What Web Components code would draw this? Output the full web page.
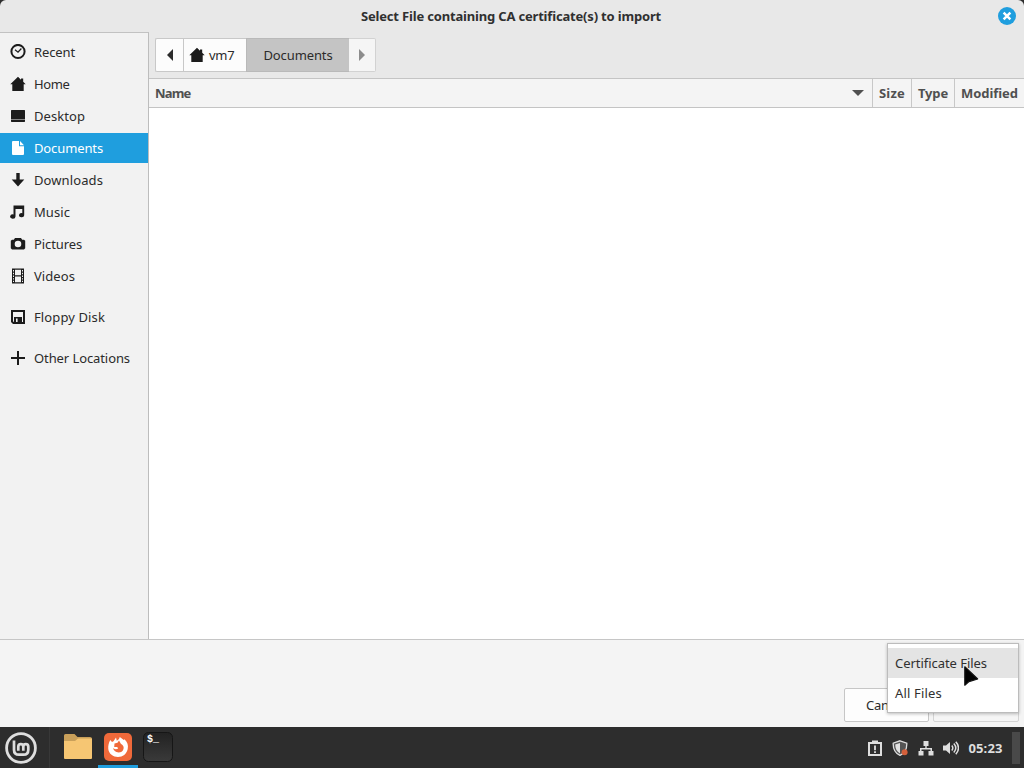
<!DOCTYPE html>
<html lang="en">
<head>
<meta charset="utf-8">
<title>Select File containing CA certificate(s) to import</title>
<style>
    html, body { margin: 0; height: 100%; overflow: hidden; background: #2d2d2d; }
    body { font: 13px/18px "Noto Sans", "Open Sans", sans-serif; color: #303030; }
</style>
</head>
<body>
<desktop-screen>
    <file-dialog slot="window" heading="Select File containing CA certificate(s) to import"></file-dialog>
    <task-panel slot="panel"></task-panel>
</desktop-screen>

<script>
// Symbolic icons, 16x16 grid unless a viewBox is given
const icons = {
    recent: '<circle cx="8" cy="7.5" r="6.6" fill="none" stroke="currentColor" stroke-width="2"/><path d="M5 5.800l3 2.400L11.400 4.500" fill="none" stroke="currentColor" stroke-width="1.300"/>',
    home: '<path d="M8 .8L.3 8.200h2V15h11.400V8.200h2L13.200 5.800V2.500h-2.200v1.200z"/>',
    desktop: '<path d="M1.500 2h13l.5.500V11.400H1V2.500zM1 12h14v1.500l-.5.500h-13l-.5-.5z"/>',
    documents: '<path d="M3 1h6v5.200h5V14a1 1 0 0 1-1 1H3a1 1 0 0 1-1-1V2a1 1 0 0 1 1-1zM10 1l4 4.200h-4z"/>',
    downloads: '<path d="M6.300 1h3.400v6.500H14.300l-6.300 7-6.300-7H6.300z"/>',
    music: '<path d="M3.500 1.500h10.700v9.800a2.600 2.100 0 1 1-1.900-2.100V5H5.500v7.500a2.700 2.200 0 1 1-2-2.100z"/>',
    pictures: '<path fill-rule="evenodd" d="M5 2h6l1.200 1.700H14l1.200 1.100v7.500L14 13.500H2L.8 12.300V4.800L2 3.700h1.800zM8 4.700a3.300 3.300 0 1 0 0 6.600 3.300 3.300 0 0 0 0-6.600z"/>',
    videos: '<path fill-rule="evenodd" d="M2 .5h12v15H2zM5 1.800v5.400h6V1.800zM5 8.600v5.600h6V8.600zM3 2v1.400h1V2zM3 4.800v1.400h1V4.800zM3 7.500v1.400h1V7.500zM3 10.200v1.400h1v-1.400zM3 12.700v1.400h1v-1.400zM12 2v1.400h1V2zM12 4.800v1.400h1V4.800zM12 7.500v1.400h1V7.500zM12 10.200v1.400h1v-1.400zM12 12.700v1.400h1v-1.400z"/>',
    floppy: '<path fill-rule="evenodd" d="M1 1h14v14H3l-2-2zM3 3v9.200l.8.800H4V8h8v5h1V3zM6 9.500V13h1.600V9.500z"/>',
    plus: '<path d="M7 1h2v6h6v2H9v6H7V9H1V7h6z"/>',
    back: '<path d="M11 2v12L5 8z"/>',
    forward: '<path d="M5 2v12l6-6z"/>',
    sort: '<path d="M2 5h12L8 11z"/>',
    close: '<circle cx="8" cy="8" r="8" fill="#1f9ede"/><path d="M5 5l6 6M11 5l-6 6" stroke="#fff" stroke-width="2.200"/>',
    report: '<path fill-rule="evenodd" d="M5 2V.5h6V2h4v14H1V2zM3 4v10h10V4zM7.100 5.500h1.800v4.800H7.100zM7.100 11.200h1.800V13H7.100z"/>',
    shield: '<path d="M8 .8l6.800 2.400c.2 5.500-1.600 9.800-6.800 12.200C2.800 13 1 8.700 1.200 3.200z" fill="#555" stroke="#ddd" stroke-width="1.300"/><path d="M8 3v10.400C4.600 11.500 3.200 8.500 3.200 4.600z" fill="#e0e0e0"/><circle cx="12.600" cy="12.300" r="3" fill="#d4603b"/>',
    network: '<path d="M5.500 1h5v5H8.700v2H14v3h1.500v4.500h-5V11h2V9.400h-9V11h2v4.500h-5V11H2V8h5.300V6H5.500z"/>',
    volume: '<path d="M0 5.500h3L7 2v12l-4-3.500H0z"/><path d="M8.800 5.500q2 2.500 0 5M10.800 3.500q4 4.500 0 9M12.800 1.800q5.400 6.200 0 12.400" fill="none" stroke="currentColor" stroke-width="1.500"/>',
    mint: '<circle cx="16" cy="16" r="14.400" fill="none" stroke="currentColor" stroke-width="2.800"/><path d="M9 8.500v9.200q0 5 5 5h4.500q4.800 0 4.800-5v-3a2.500 2.500 0 0 0-5 0v4m0-4a2.500 2.500 0 0 0-5 0v4" fill="none" stroke="currentColor" stroke-width="2.700"/>',
    folder: '<path d="M2 4.500q0-1.500 1.500-1.500h9l3 3H28q2 0 2 2v4H2z" fill="#c9a05a"/><path d="M2 10h11l3-2.500h14V27q0 1-1 1H3q-1 0-1-1z" fill="#f6c673"/>',
    firefox: '<rect x="2" y="2" width="28" height="28" rx="5" fill="#f0693a"/><path d="M8.300 9l1.700 2 1.500-.8L14 6.500l.8 3.200L17 8l.8-2 4 3 .7-.7c3 3 4 6 3.200 9.700-1 5-5 8-9.700 8S6.800 22.800 6.300 18C6 14.500 6.800 11.500 8.300 9z" fill="#fff"/><path d="M12.500 12.500l3-.8 1.500-2.200 2 3.500c2.800 1.200 3.300 4 2 6.200-1.300 2-4 2.800-6.500 1.800-2-.8-3.300-2.400-3.300-4 1.500 1.400 3.300 1.500 5 .5l-1-1.500h-3z" fill="#f0693a"/>',
    terminal: '<defs><linearGradient id="t" x2="0" y2="1"><stop stop-color="#222"/><stop offset="1" stop-color="#3a3a3a"/></linearGradient></defs><rect x="1.500" y="1.500" width="29" height="29" rx="5" fill="url(#t)" stroke="#161616"/><text x="5" y="11" font-family="Liberation Mono" font-weight="bold" font-size="10" fill="#fff">$_</text>',
    cursor: '<path d="M.8.800v18.400L5 15.600 13.700 13z" fill="#000" stroke="#111" stroke-width="1.200" stroke-linejoin="round"/>'
};
const boxes = { mint: '0 0 32 32', folder: '0 0 32 32', firefox: '0 0 32 32', terminal: '0 0 32 32', cursor: '0 0 16 21' };

// Small helper so each class only has to hold its own markup
class BaseElement extends HTMLElement {
    constructor(){
        super();
        this.attachShadow({mode: 'open'});
    }

    connectedCallback(){
        this.shadowRoot.innerHTML = this.render();
    }
}

class UiIcon extends BaseElement {
    render(){
        const name = this.getAttribute('name');
        return `<style>
            :host { display: block; flex: none; width: var(--size, 16px); height: var(--size, 16px); }
            svg { display: block; width: 100%; height: 100%; fill: currentColor; }
        </style>
        <svg viewBox="${boxes[name] || '0 0 16 16'}">${icons[name]}</svg>`;
    }
}

// One line of text, tracked in or out so that it fills the given width
class UiLabel extends BaseElement {
    connectedCallback(){
        super.connectedCallback();
        const width = Number(this.getAttribute('width'));
        const span = this.shadowRoot.querySelector('span');
        const natural = span.getBoundingClientRect().width;
        if (width && natural){
            span.style.letterSpacing = (width - natural) / this.textContent.length + 'px';
        }
    }

    render(){
        return `<style>
            :host { display: block; flex: none; white-space: nowrap; }
            span { display: inline-block; }
        </style>
        <span><slot></slot></span>`;
    }
}

class PlaceRow extends BaseElement {
    render(){
        return `<style>
            :host { display: flex; align-items: center; gap: 8px; height: 30px; margin-bottom: 2px; padding-left: 10px; color: #2b2b2b; }
            :host([selected]) { background: #1f9ede; color: #fff; }
            :host([apart]) { margin-top: 11px; }
            ui-icon { color: #1c1c1c; }
            :host([selected]) ui-icon { color: #fff; }
        </style>
        <ui-icon name="${this.getAttribute('icon')}"></ui-icon>
        <slot></slot>`;
    }
}

class PlacesSidebar extends BaseElement {
    render(){
        return `<style>
            :host { display: block; box-sizing: border-box; width: 149px; padding-top: 4px; background: #f2f2f2; border-top: 1px solid #c2c2c2; border-right: 1px solid #bdbdbd; }
        </style>
        <place-row icon="recent"><ui-label width="41">Recent</ui-label></place-row>
        <place-row icon="home"><ui-label width="35.500">Home</ui-label></place-row>
        <place-row icon="desktop"><ui-label width="51">Desktop</ui-label></place-row>
        <place-row icon="documents" selected><ui-label width="69">Documents</ui-label></place-row>
        <place-row icon="downloads"><ui-label width="69">Downloads</ui-label></place-row>
        <place-row icon="music"><ui-label width="36">Music</ui-label></place-row>
        <place-row icon="pictures"><ui-label width="48">Pictures</ui-label></place-row>
        <place-row icon="videos"><ui-label width="41">Videos</ui-label></place-row>
        <place-row icon="floppy" apart><ui-label width="71">Floppy Disk</ui-label></place-row>
        <place-row icon="plus" apart><ui-label width="96">Other Locations</ui-label></place-row>`;
    }
}

class PathBar extends BaseElement {
    render(){
        return `<style>
            :host { display: flex; box-sizing: border-box; height: 46px; padding: 6px; background: #e8e8e8; }
            button { display: flex; align-items: center; justify-content: center; gap: 4px; box-sizing: border-box; height: 34px; margin: 0; padding: 0; background: #fcfcfc; border: 1px solid #c8c8c8; border-right: 0; font: inherit; color: #2b2b2b; }
            .back { width: 28px; border-radius: 2px 0 0 2px; }
            .home { width: 63px; justify-content: flex-start; padding-left: 5px; }
            .home ui-icon { color: #1c1c1c; }
            .here { width: 103px; background: #c4c4c4; border-color: #b9b9b9; }
            .next { width: 27px; background: #f5f5f5; border: 1px solid #d2d2d2; border-left: 0; border-radius: 0 2px 2px 0; color: #8c8c8c; }
        </style>
        <button class="back"><ui-icon name="back"></ui-icon></button>
        <button class="home"><ui-icon name="home"></ui-icon><ui-label width="25.500">vm7</ui-label></button>
        <button class="here"><ui-label width="69">Documents</ui-label></button>
        <button class="next"><ui-icon name="forward"></ui-icon></button>`;
    }
}

class FileList extends BaseElement {
    render(){
        return `<style>
            :host { display: flex; flex-direction: column; background: #fff; }
            header { display: flex; box-sizing: border-box; height: 30px; background: #f4f4f4; border: 1px solid #c4c4c4; border-width: 1px 0; font-weight: bold; color: #505050; }
            div { display: flex; align-items: center; box-sizing: border-box; padding-left: 6px; border-right: 1px solid #c8c8c8; }
            .name { flex: 1; justify-content: space-between; padding-right: 6px; }
            .size { width: 39px; }
            .type { width: 43px; }
            .modified { width: 69px; border: 0; }
        </style>
        <header>
            <div class="name"><ui-label width="35.500">Name</ui-label><ui-icon name="sort"></ui-icon></div>
            <div class="size"><ui-label width="26">Size</ui-label></div>
            <div class="type"><ui-label width="30">Type</ui-label></div>
            <div class="modified"><ui-label width="57">Modified</ui-label></div>
        </header>`;
    }
}

class FilterMenu extends BaseElement {
    render(){
        return `<style>
            :host { display: block; position: absolute; right: 5px; bottom: 14px; box-sizing: border-box; width: 132px; height: 70px; padding: 4px 0; background: #fff; border: 1px solid #bcbcbc; box-shadow: 0 1px 3px rgba(0,0,0,.25); }
            div { display: flex; align-items: center; height: 30px; padding-left: 7px; }
            .hover { background: #e4e4e4; }
            ui-icon { position: absolute; left: 76px; top: 22px; width: 16px; height: 21px; }
        </style>
        <div class="hover"><ui-label width="92">Certificate Files</ui-label></div>
        <div><ui-label width="47">All Files</ui-label></div>
        <ui-icon name="cursor"></ui-icon>`;
    }
}

class FileDialog extends BaseElement {
    render(){
        return `<style>
            :host { display: flex; flex-direction: column; height: 100%; background: #e8e8e8; border-radius: 6px 6px 0 0; overflow: hidden; }
            .title { display: grid; grid-template-columns: 1fr auto 1fr; align-items: center; height: 32px; font-weight: bold; color: #303030; }
            .title ui-label { grid-column: 2; margin-right: 2px; }
            .title ui-icon { --size: 18px; justify-self: end; margin-right: 8px; }
            .main { display: flex; flex: 1; }
            .content { display: flex; flex: 1; flex-direction: column; }
            file-list { flex: 1; }
            .actions { display: flex; align-items: flex-end; justify-content: flex-end; gap: 4px; position: relative; box-sizing: border-box; height: 88px; padding: 0 5px 5px; background: #f4f4f4; border-top: 1px solid #c6c6c6; }
            button { display: flex; align-items: center; box-sizing: border-box; width: 85px; height: 34px; margin: 0; padding: 0 0 0 21px; background: #fdfdfd; border: 1px solid #c6c6c6; border-radius: 2px; font: inherit; color: #2b2b2b; }
            .open { width: 86px; background: #f5f5f5; border-color: #d4d4d4; }
        </style>
        <div class="title"><ui-label width="300">${this.getAttribute('heading')}</ui-label><ui-icon name="close"></ui-icon></div>
        <div class="main">
            <places-sidebar></places-sidebar>
            <div class="content"><path-bar></path-bar><file-list></file-list></div>
        </div>
        <div class="actions">
            <button><ui-label width="39">Cancel</ui-label></button>
            <button class="open"></button>
            <filter-menu></filter-menu>
        </div>`;
    }
}

class TaskPanel extends BaseElement {
    render(){
        return `<style>
            :host { display: flex; align-items: stretch; justify-content: space-between; height: 100%; background: #2d2d2d; color: #dedede; }
            .apps, .tray { display: flex; align-items: center; }
            .apps { --size: 32px; }
            .menu { display: flex; align-items: center; width: 44px; height: 100%; padding-left: 5px; border-right: 1px solid #383838; }
            .app { display: flex; align-items: center; justify-content: center; box-sizing: border-box; width: 40px; height: 100%; padding-top: 2px; border-bottom: 3px solid transparent; }
            .app:nth-child(2) { margin-left: 8px; }
            .active { border-color: #1f9ede; }
            .tray { gap: 9.500px; }
            .clock { font-weight: bold; }
            .corner { width: 8px; height: 32px; margin-right: 4px; background: #494949; }
        </style>
        <div class="apps">
            <div class="menu"><ui-icon name="mint"></ui-icon></div>
            <div class="app"><ui-icon name="folder"></ui-icon></div>
            <div class="app active"><ui-icon name="firefox"></ui-icon></div>
            <div class="app"><ui-icon name="terminal"></ui-icon></div>
        </div>
        <div class="tray">
            <ui-icon name="report"></ui-icon>
            <ui-icon name="shield"></ui-icon>
            <ui-icon name="network"></ui-icon>
            <ui-icon name="volume"></ui-icon>
            <ui-label class="clock" width="34">05:23</ui-label>
            <div class="corner"></div>
        </div>`;
    }
}

class DesktopScreen extends BaseElement {
    render(){
        return `<style>
            :host { display: grid; grid-template-rows: 727px 41px; width: 1024px; height: 768px; }
        </style>
        <slot name="window"></slot>
        <slot name="panel"></slot>`;
    }
}

window.customElements.define('ui-icon', UiIcon);
window.customElements.define('ui-label', UiLabel);
window.customElements.define('place-row', PlaceRow);
window.customElements.define('places-sidebar', PlacesSidebar);
window.customElements.define('path-bar', PathBar);
window.customElements.define('file-list', FileList);
window.customElements.define('filter-menu', FilterMenu);
window.customElements.define('file-dialog', FileDialog);
window.customElements.define('task-panel', TaskPanel);
window.customElements.define('desktop-screen', DesktopScreen);
</script>
</body>
</html>
